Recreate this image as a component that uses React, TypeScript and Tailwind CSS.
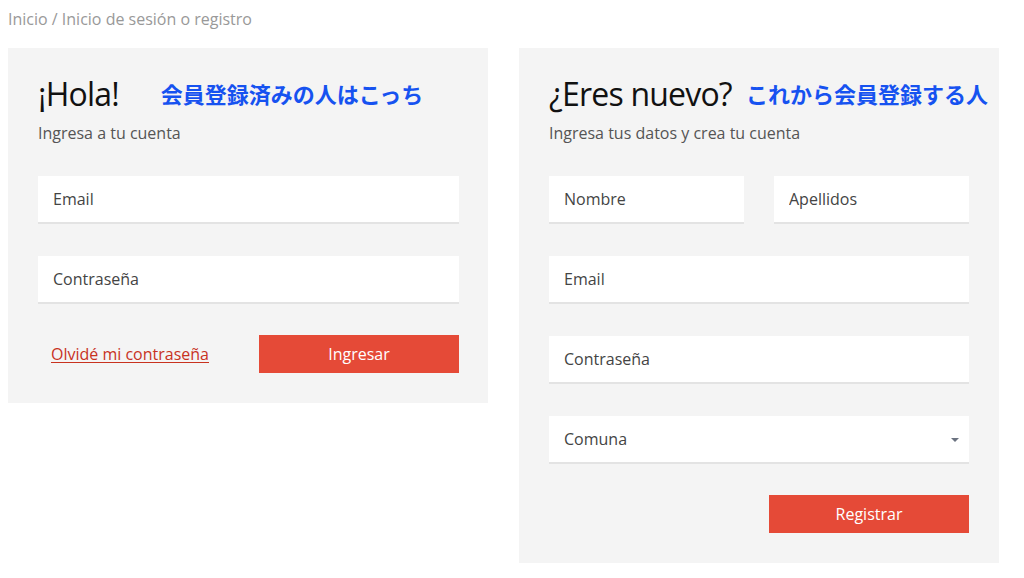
import { useState } from "react";

const font = { fontFamily: '"Open Sans", "Noto Sans CJK JP", sans-serif' };

function Field({ placeholder, type = "text" }: { placeholder: string; type?: string }) {
  return (
    <input
      type={type}
      placeholder={placeholder}
      className="h-12 w-full bg-white px-[15px] text-base text-[#444] placeholder:text-[#444] border-b-2 border-[#e3e3e3] outline-none"
    />
  );
}

export default function App() {
  const [comuna, setComuna] = useState("");

  return (
    <div style={font} className="h-[578px] w-[1024px] bg-white overflow-hidden">
      <div className="px-2 pt-[9px] text-base text-[#999] leading-5">
        Inicio / Inicio de sesión o registro
      </div>

      <div className="mt-[19px] flex items-start gap-[31px] px-2">
        {/* Login */}
        <div className="w-[480px] bg-[#f4f4f4] pl-[30px] pr-[29px] pt-[28px] pb-[30px]">
          <div className="flex items-center h-9 whitespace-nowrap">
            <h2 className="text-[32px] font-medium text-[#111] tracking-tight">¡Hola!</h2>
            <span className="ml-[42px] text-[22px] font-bold text-[#1652f0]">会員登録済みの人はこっち</span>
          </div>
          <p className="mt-[11px] text-base text-[#555] leading-5">Ingresa a tu cuenta</p>
          <div className="mt-[33px] flex flex-col gap-8">
            <Field placeholder="Email" />
            <Field placeholder="Contraseña" type="password" />
          </div>
          <div className="mt-[31px] flex items-center">
            <div className="w-[221px] pl-[13px]">
              <a href="#" className="text-base text-[#c8321f] underline underline-offset-2">
                Olvidé mi contraseña
              </a>
            </div>
            <button className="h-[38px] w-[200px] bg-[#e54a37] text-base text-white">Ingresar</button>
          </div>
        </div>

        {/* Register */}
        <div className="w-[480px] bg-[#f4f4f4] pl-[30px] pr-[30px] pt-[28px] pb-[30px]">
          <div className="flex items-center h-9 whitespace-nowrap">
            <h2 className="text-[32px] font-medium text-[#111] tracking-tight">¿Eres nuevo?</h2>
            <span className="ml-[14px] text-[22px] font-bold text-[#1652f0]">これから会員登録する人</span>
          </div>
          <p className="mt-[11px] text-base text-[#555] leading-5">Ingresa tus datos y crea tu cuenta</p>
          <div className="mt-[33px] flex flex-col gap-8">
            <div className="grid grid-cols-2 gap-[30px]">
              <Field placeholder="Nombre" />
              <Field placeholder="Apellidos" />
            </div>
            <Field placeholder="Email" />
            <Field placeholder="Contraseña" type="password" />
            <div className="relative">
              <select
                value={comuna}
                onChange={(e) => setComuna(e.target.value)}
                className="h-12 w-full appearance-none bg-white px-[15px] text-base text-[#444] border-b-2 border-[#e3e3e3] outline-none"
              >
                <option value="">Comuna</option>
                <option value="santiago">Santiago</option>
                <option value="providencia">Providencia</option>
              </select>
              <span className="pointer-events-none absolute right-[10px] top-[22px] h-0 w-0 border-x-[4px] border-t-[4px] border-x-transparent border-t-[#6b7280]" />
            </div>
          </div>
          <div className="mt-[31px] flex justify-end">
            <button className="h-[38px] w-[200px] bg-[#e54a37] text-base text-white">Registrar</button>
          </div>
        </div>
      </div>
    </div>
  );
}
